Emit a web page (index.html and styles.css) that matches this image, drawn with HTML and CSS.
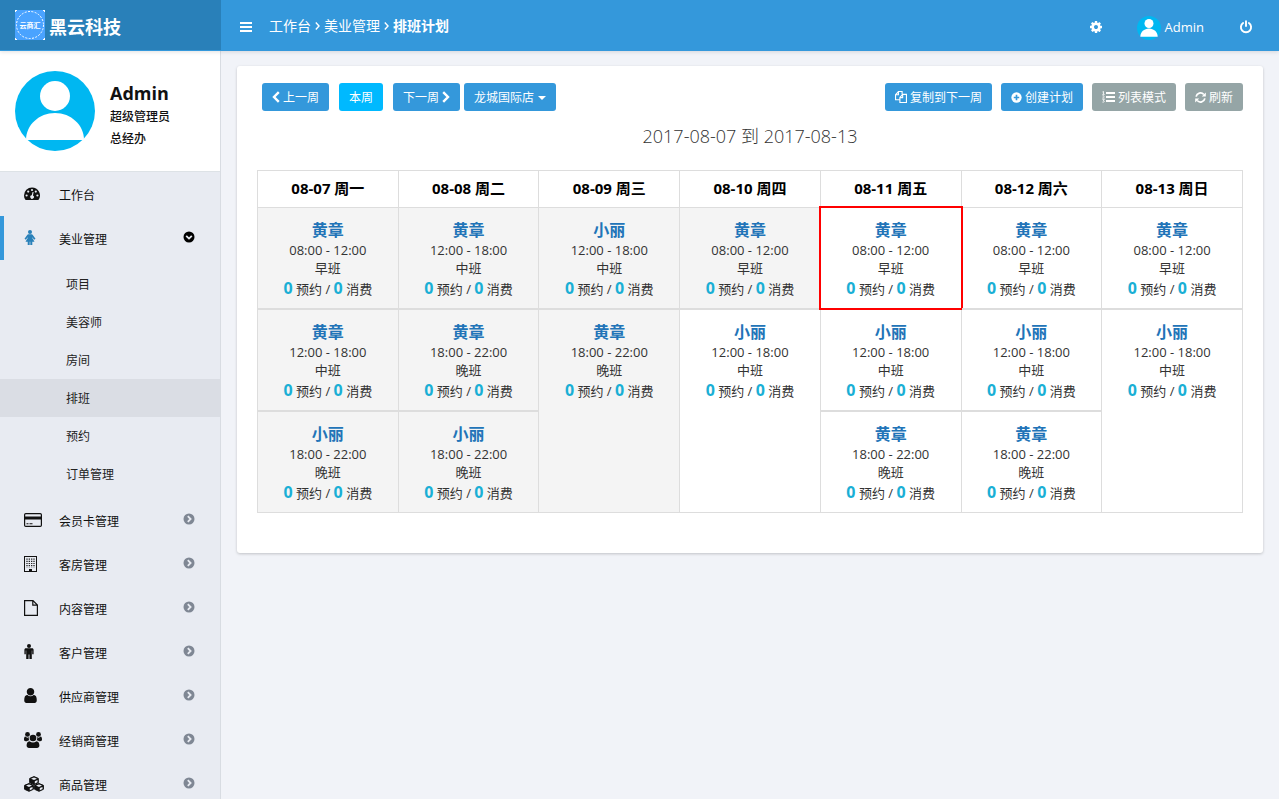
FILE: index.html
```html
<!DOCTYPE html>
<html lang="zh-CN">
<head>
<meta charset="utf-8">
<title>排班计划</title>
<link rel="stylesheet" href="styles.css">
</head>
<body>
<svg class="defs" aria-hidden="true">
  <symbol id="go" viewBox="0 0 12 12"><circle cx="6" cy="6" r="5.500" fill="currentColor"/><path d="M4.800 3.200 7.600 6 4.800 8.800" fill="none" stroke="#e8ebf2" stroke-width="1.800"/></symbol>
  <symbol id="down" viewBox="0 0 12 12"><circle cx="6" cy="6" r="5.500" fill="currentColor"/><path d="M3.200 4.800 6 7.600 8.800 4.800" fill="none" stroke="#e8ebf2" stroke-width="1.800"/></symbol>
  <symbol id="avatar" viewBox="0 0 80 80"><circle cx="40" cy="40" r="40" fill="#00b7f1"/><circle cx="40" cy="25" r="15" fill="#fff"/><path d="M11 69C11 54 24 42 40 42s29 12 29 27z" fill="#fff"/></symbol>
</svg>
<header class="topbar">
  <a class="brand" href="#">
    <svg width="30" height="30" viewBox="0 0 30 30" aria-hidden="true"><rect width="30" height="30" fill="#4aa3ff"/><circle cx="15" cy="15" r="13.500" fill="none" stroke="#fff" stroke-dasharray="2 1.400"/><path d="M0 0h2v1H1v1H0zM28 0h2v2h-1V1h-1zM0 28h1v1h1v1H0zM29 28h1v2h-2v-1h1z" fill="#fff"/><text x="15" y="18" text-anchor="middle" class="logo-text">云商汇</text></svg>
    <span>黑云科技</span>
  </a>
  <div class="topnav">
    <button class="icon-btn" type="button" aria-label="菜单"><svg width="14" height="14" viewBox="0 0 14 14"><path d="M1 2h12v2H1zM1 6h12v2H1zM1 10h12v2H1z" fill="currentColor"/></svg></button>
    <nav class="crumbs">
      <a href="#">工作台</a><svg width="5" height="8" viewBox="0 0 5 8"><path d="M.8.600 4 4 .8 7.400" fill="none" stroke="currentColor" stroke-width="1.400"/></svg><a href="#">美业管理</a><svg width="5" height="8" viewBox="0 0 5 8"><path d="M.8.600 4 4 .8 7.400" fill="none" stroke="currentColor" stroke-width="1.400"/></svg><strong>排班计划</strong>
    </nav>
    <div class="tools">
      <button class="icon-btn" type="button" aria-label="设置"><svg width="14" height="14" viewBox="0 0 1792 1792"><path fill="currentColor" d="M1152 896q0-106-75-181t-181-75-181 75-75 181 75 181 181 75 181-75 75-181zm512-109v222q0 12-8 23t-20 13l-185 28q-19 54-39 91 35 50 107 138 10 12 10 25t-9 23q-27 37-99 108t-94 71q-12 0-26-9l-138-108q-44 23-91 38-16 136-29 186-7 28-36 28h-222q-14 0-24.500-8.500t-11.500-21.500l-28-184q-49-16-90-37l-141 107q-10 9-25 9-14 0-25-11-126-114-165-168-7-10-7-23 0-12 8-23 15-21 51-66.500t54-70.500q-27-50-41-99l-183-27q-13-2-21-12.500t-8-23.500v-222q0-12 8-23t19-13l186-28q14-46 39-92-40-57-107-138-10-12-10-24 0-10 9-23 26-36 98.500-107.500t94.500-71.500q13 0 26 10l138 107q44-23 91-38 16-136 29-186 7-28 36-28h222q14 0 24.500 8.500t11.500 21.500l28 184q49 16 90 37l142-107q9-9 24-9 13 0 25 10 129 119 165 170 7 8 7 22 0 12-8 23-15 21-51 66.500t-54 70.500q26 50 41 98l183 28q13 2 21 12.500t8 23.500z"/></svg></button>
      <a class="account" href="#"><svg width="24" height="24"><use href="#avatar"/></svg><span>Admin</span></a>
      <button class="icon-btn" type="button" aria-label="退出"><svg width="14" height="14" viewBox="0 0 14 14" fill="none" stroke="currentColor" stroke-width="1.900" stroke-linecap="round"><path d="M4.100 3A5.100 5.100 0 1 0 9.900 3M7 1.200V6"/></svg></button>
    </div>
  </div>
</header>
<div class="body">
  <aside class="sidebar">
    <div class="profile">
      <svg width="80" height="80" aria-hidden="true"><use href="#avatar"/></svg>
      <div><h2>Admin</h2><p>超级管理员</p><p>总经办</p></div>
    </div>
    <ul class="menu">
      <li><a href="#"><svg class="ico" width="16" height="13" viewBox="0 0 16 13"><path d="M8 .5a8 8 0 0 0-8 8c0 1.500.4 2.900 1.200 4.100.2.300.4.400.7.400h12.200c.3 0 .5-.1.700-.4A8 8 0 0 0 8 .5z" fill="currentColor"/><g fill="#e8ebf2"><circle cx="2.600" cy="8.500" r="1.100"/><circle cx="4.200" cy="4.600" r="1.100"/><circle cx="8" cy="3" r="1.100"/><circle cx="11.800" cy="4.600" r="1.100"/><circle cx="13.400" cy="8.500" r="1.100"/><path d="M8.600 4.900 9.600 5.100 9 8.400A1.800 1.800 0 1 1 7.700 8.200z"/></g></svg><span>工作台</span></a></li>
      <li class="open"><a href="#"><svg class="ico" width="12" height="15" viewBox="0 0 12 15" fill="currentColor"><circle cx="6" cy="2" r="2"/><path d="M4.300 4.300h3.400c.5 0 .8.200 1.100.6l2.700 3.800-1.400 1L8.300 7.200v.8l2.200 3.800H8.300V15H6.300v-3.200h-.6V15H3.700v-3.200H1.500L3.700 8v-.8L1.900 9.700l-1.400-1 2.700-3.800c.3-.4.600-.6 1.100-.6z"/></svg><span>美业管理</span><svg class="arrow" width="12" height="12"><use href="#down"/></svg></a>
        <ul class="submenu">
          <li><a href="#">项目</a></li><li><a href="#">美容师</a></li><li><a href="#">房间</a></li><li><a class="current" href="#">排班</a></li><li><a href="#">预约</a></li><li><a href="#">订单管理</a></li>
        </ul></li>
      <li><a href="#"><svg class="ico" width="18" height="14" viewBox="0 0 18 14"><rect x=".6" y=".6" width="16.800" height="12.800" rx="1.200" fill="none" stroke="currentColor" stroke-width="1.200"/><path d="M1 3.500h16v3H1zM2.500 10.200h2v1h-2zM5.500 10.200h3v1h-3z" fill="currentColor"/></svg><span>会员卡管理</span><svg class="arrow" width="12" height="12"><use href="#go"/></svg></a></li>
      <li><a href="#"><svg class="ico" width="13" height="16" viewBox="0 0 13 16"><rect x=".5" y=".5" width="12" height="15" fill="none" stroke="currentColor"/><path d="M3 2.500v9M5.300 2.500v9M7.700 2.500v9M10 2.500v9" stroke="currentColor" stroke-width="1.200" stroke-dasharray="1.200 1"/><path d="M5 16v-3h3v3z" fill="currentColor"/></svg><span>客房管理</span><svg class="arrow" width="12" height="12"><use href="#go"/></svg></a></li>
      <li><a href="#"><svg class="ico" width="14" height="16" viewBox="0 0 14 16"><path d="M.6.600H9l4.400 4.400v10.400H.6zM8.800.8v4.400h4.400" fill="none" stroke="currentColor" stroke-width="1.200"/></svg><span>内容管理</span><svg class="arrow" width="12" height="12"><use href="#go"/></svg></a></li>
      <li><a href="#"><svg class="ico" width="10" height="15" viewBox="0 0 10 15" fill="currentColor"><circle cx="5" cy="2" r="2"/><path d="M2 4.300h6c1 0 1.600.7 1.600 1.600v4.300H8.200V6.500h-.4V15H5.400v-4.500h-.8V15H2.200V6.500h-.4v3.700H.4V5.900C.4 5 1 4.300 2 4.300z"/></svg><span>客户管理</span><svg class="arrow" width="12" height="12"><use href="#go"/></svg></a></li>
      <li><a href="#"><svg class="ico" width="13" height="15" viewBox="256 128 1280 1536"><path fill="currentColor" d="M1536 1399q0 109-62.500 187t-150.500 78h-854q-88 0-150.500-78t-62.500-187q0-85 8.500-160.500t31.500-152 58.500-131 94-89 134.500-34.500q131 128 313 128t313-128q76 0 134.500 34.500t94 89 58.500 131 31.500 152 8.500 160.500zm-256-887q0 159-112.500 271.500t-271.500 112.500-271.500-112.500-112.500-271.500 112.500-271.500 271.500-112.500 271.500 112.500 112.500 271.500z"/></svg><span>供应商管理</span><svg class="arrow" width="12" height="12"><use href="#go"/></svg></a></li>
      <li><a href="#"><svg class="ico" width="18" height="16" viewBox="0 0 18 16" fill="currentColor"><circle cx="3.500" cy="2.400" r="2.400"/><circle cx="14.500" cy="2.400" r="2.400"/><path d="M1.300 4.600C2.600 6 4 5.800 5 5c-.5 1.200-.3 2.300.4 3.300-1 0-1.800.4-2.400 1H1.800C.6 9.300 0 8.700 0 7.600 0 6 .4 4.600 1.300 4.600zM16.700 4.600C15.400 6 14 5.800 13 5c.5 1.200.3 2.300-.4 3.300 1 0 1.800.4 2.400 1h1.200c1.200 0 1.800-.6 1.800-1.700 0-1.600-.4-3-1.300-3z"/><circle cx="9" cy="6" r="3.300"/><path d="M5.500 9.200c2.300 1.800 4.700 1.800 7 0 2 .1 2.900 2 2.900 4.400 0 1.500-1 2.400-2.400 2.400H5c-1.400 0-2.400-.9-2.400-2.400 0-2.400.9-4.300 2.900-4.400z"/></svg><span>经销商管理</span><svg class="arrow" width="12" height="12"><use href="#go"/></svg></a></li>
      <li><a href="#"><svg class="ico" width="20" height="16" viewBox="0 0 20 16"><g fill="currentColor" stroke="currentColor" stroke-linejoin="round"><path d="m10 .6 4.300 1.800v4.300L10 8.600 5.700 6.700V2.400zM5 7.500l4.400 1.800v4L5 15.300.6 13.300v-4zM15 7.500l4.400 1.800v4L15 15.300l-4.400-2v-4z"/></g><path d="m10 1.500 3 1.200-3 1.300-3-1.300zM10.800 5.200l2.700-1.200v2.200l-2.700 1.200zM5 8.400l3 1.200-3 1.300-3-1.300zM5.800 12.100l2.700-1.200V13l-2.700 1.300zM15 8.400l3 1.200-3 1.300-3-1.300zM15.800 12.100l2.700-1.200V13l-2.700 1.300z" fill="#e8ebf2"/></svg><span>商品管理</span><svg class="arrow" width="12" height="12"><use href="#go"/></svg></a></li>
    </ul>
  </aside>
  <main class="main">
    <section class="panel">
      <div class="toolbar">
        <button class="btn" type="button"><svg width="8" height="12" viewBox="0 0 8 12"><path d="M6.800 1.200 2 6l4.800 4.800" fill="none" stroke="currentColor" stroke-width="2.400"/></svg><span>上一周</span></button>
        <button class="btn now" type="button"><span>本周</span></button>
        <div class="pair">
          <button class="btn" type="button"><span>下一周</span><svg width="8" height="12" viewBox="0 0 8 12"><path d="M1.200 1.200 6 6l-4.800 4.800" fill="none" stroke="currentColor" stroke-width="2.400"/></svg></button>
          <div class="shop"><select class="btn" aria-label="门店"><option>龙城国际店</option></select><svg width="8" height="4" viewBox="0 0 8 4"><path d="M0 0h8L4 4z" fill="#fff"/></svg></div>
        </div>
        <div class="actions">
          <button class="btn" type="button"><svg width="12" height="12" viewBox="0 0 13 13" fill="none" stroke="currentColor" stroke-width="1.200"><path d="M5.200 9.500H.6V4L3.700.6h4v3M3.700.8V4H.8M5.300 12.400V7l3-3.300h4.100v8.700zM8.300 4v3.200H5.500"/></svg><span>复制到下一周</span></button>
          <button class="btn" type="button"><svg width="11" height="11" viewBox="0 0 12 12"><circle cx="6" cy="6" r="5.600" fill="currentColor"/><path d="M6 3v6M3 6h6" stroke="#3498db" stroke-width="1.800"/></svg><span>创建计划</span></button>
          <button class="btn grey" type="button"><svg width="13" height="12" viewBox="0 0 13 12"><path d="M4 1h9v2H4zM4 5h9v2H4zM4 9h9v2H4z" fill="currentColor"/><path d="M.4 1 1.500.4V3.300M.3 3.400h2.400M.4 4.900c2-.7 2.400.3.200 2.200h2M.4 8.600h2L1.300 9.800c1.600 0 1.300 1.700-.9 1.300" fill="none" stroke="currentColor" stroke-width=".8"/></svg><span>列表模式</span></button>
          <button class="btn grey" type="button"><svg width="11" height="11" viewBox="0 0 12 12"><path d="M1.200 5A4.900 4.900 0 0 1 9.600 2.700M10.800 7A4.900 4.900 0 0 1 2.400 9.300" fill="none" stroke="currentColor" stroke-width="1.900"/><path d="M11.800.6V5H7.400zM.2 11.400V7h4.400z" fill="currentColor"/></svg><span>刷新</span></button>
        </div>
      </div>
      <h1 class="range">2017-08-07 到 2017-08-13</h1>
      <table class="week">
        <thead><tr><th>08-07 周一</th><th>08-08 周二</th><th>08-09 周三</th><th>08-10 周四</th><th>08-11 周五</th><th>08-12 周六</th><th>08-13 周日</th></tr></thead>
        <tbody id="shifts"></tbody>
      </table>
    </section>
  </main>
</div>
<script src="shifts.js"></script>
</body>
</html>
```
FILE: shifts.js
```js
const TIMES = { 早班: "08:00 - 12:00", 中班: "12:00 - 18:00", 晚班: "18:00 - 22:00" };
const rows = [
  [["黄章", "早班", "past"], ["黄章", "中班", "past"], ["小丽", "中班", "past"], ["黄章", "早班", "past"], ["黄章", "早班", "selected"], ["黄章", "早班"], ["黄章", "早班"]],
  [["黄章", "中班", "past"], ["黄章", "晚班", "past"], ["黄章", "晚班", "past last"], ["小丽", "中班", "last"], ["小丽", "中班"], ["小丽", "中班"], ["小丽", "中班", "last"]],
  [["小丽", "晚班", "past"], ["小丽", "晚班", "past"], [null, null, "past"], [null], ["黄章", "晚班"], ["黄章", "晚班"], [null]]
];
document.getElementById("shifts").innerHTML = rows.map(row => "<tr>" + row.map(([name, shift, state = ""]) =>
  `<td class="${state}">` + (name ? `<a class="name" href="#">${name}</a><div>${TIMES[shift]}</div><div>${shift}</div><div class="count"><b>0</b> 预约 / <b>0</b> 消费</div>` : "") + "</td>"
).join("") + "</tr>").join("");
```
FILE: styles.css
```css
* { box-sizing: border-box; }
html, body { height: 100%; overflow: hidden; }
body {
  margin: 0;
  display: flex;
  flex-direction: column;
  background: #f1f3f8;
  color: #222;
  font: 12px/18px "Open Sans", "Noto Sans CJK SC", sans-serif;
}
a { color: inherit; text-decoration: none; }
ul, h1, h2, p { margin: 0; padding: 0; list-style: none; }
svg { display: block; flex: none; }
button, select { font: inherit; color: inherit; border: 0; background: none; cursor: pointer; }
.defs { position: absolute; width: 0; height: 0; }

.topbar {
  flex: none;
  display: flex;
  height: 51px;
  background: #3498db;
  color: #fff;
  position: relative;
  box-shadow: 0 1px 4px rgba(0, 0, 0, .12);
}
.brand {
  width: 221px;
  padding-left: 15px;
  display: flex;
  align-items: center;
  gap: 4px;
  background: #2980b9;
  border-bottom: 1px solid #3498db;
  font-size: 18px;
  font-weight: 700;
}
.brand span { padding-top: 3px; }
.logo-text { font-size: 7px; fill: #fff; font-weight: 700; }
.topnav { flex: 1; display: flex; align-items: center; padding: 2px 26px 0 18px; }
.icon-btn { padding: 0; display: block; }
.crumbs { display: flex; align-items: center; gap: 4px; margin-left: 16px; font-size: 14px; padding-bottom: 2px; }
.tools { margin-left: auto; display: flex; align-items: center; }
.account { display: flex; align-items: center; gap: 4px; margin: 0 35px 0 34px; font-size: 13px; }
.account svg { margin-top: 2px; }

.body { flex: 1; display: flex; min-height: 0; }
.sidebar {
  flex: none;
  width: 221px;
  background: #e8ebf2;
  border-right: 1px solid #d8dce2;
  overflow: hidden;
}
.profile {
  height: 121px;
  padding: 0 15px;
  display: flex;
  align-items: center;
  gap: 15px;
  background: #fff;
  border-bottom: 1px solid #dde2e6;
  color: #111;
}
.profile div { padding-top: 8px; }
.profile h2 { font-size: 18px; line-height: 26px; }
.profile p { line-height: 22px; font-weight: 500; }
.menu > li > a {
  display: grid;
  grid-template-columns: 35px 1fr 12px;
  align-items: center;
  height: 44px;
  padding: 0 25px 0 24px;
  color: #111;
}
.menu > li > a span { padding-top: 3px; }
.ico { margin-bottom: 1px; }
.arrow { color: #7f8794; margin-bottom: 2px; }
.open .arrow { color: #000; }
.open .ico { color: #2980b9; }
.menu > .open > a { border-left: 4px solid #3498db; padding-left: 20px; }
.submenu { padding: 5px 0; }
.submenu a { display: block; padding: 11px 0 9px 66px; }
.submenu .current { background: #dadde4; }

.main { flex: 1; min-width: 0; padding: 15px 16px; }
.panel {
  padding: 17px 20px 40px;
  background: #fff;
  border-radius: 3px;
  box-shadow: 0 1px 3px rgba(0, 0, 0, .2);
}
.toolbar { display: flex; gap: 10px; padding-left: 5px; }
.pair { display: flex; gap: 4px; }
.actions { display: flex; gap: 9px; margin-left: auto; }
.btn {
  display: flex;
  align-items: center;
  gap: 3px;
  height: 28px;
  padding: 0 10px;
  border-radius: 3px;
  background: #3498db;
  color: #fff;
  white-space: nowrap;
}
.btn span { padding-top: 2px; }
.now { background: #00b9ff; }
.grey { background: #95a5a6; }
.shop { position: relative; }
.shop select { appearance: none; padding: 2px 21px 0 10px; }
.shop svg { position: absolute; right: 10px; top: 13px; pointer-events: none; }
.range {
  margin: 11px 0 20px;
  text-align: center;
  font-size: 18px;
  line-height: 28px;
  font-weight: 300;
  color: #333;
}

.week {
  width: 100%;
  table-layout: fixed;
  border-collapse: separate;
  border-spacing: 0;
  border: solid #ddd;
  border-width: 1px 0 0 1px;
  text-align: center;
}
.week th {
  height: 37px;
  padding: 0 0 2px;
  border: solid #ddd;
  border-width: 0 1px 1px 0;
  font-size: 15px;
  color: #000;
}
.week td {
  position: relative;
  padding: 11px 0 7px;
  vertical-align: top;
  border: solid #ddd;
  border-width: 0 1px 2px 0;
  font-size: 13px;
  color: #333;
}
.week td.past { background: #f4f4f4; }
.week td.last { border-bottom-width: 0; }
.week tr:last-child td { border-bottom-width: 1px; }
.week td.selected::after {
  content: "";
  position: absolute;
  inset: -2px;
  border: 2px solid #f00;
  pointer-events: none;
}
.name { display: block; font-size: 16px; line-height: 22px; font-weight: 700; color: #2274b8; }
.count { line-height: 24px; }
.count b { font-size: 16px; line-height: 16px; color: #1aafd5; }
```
